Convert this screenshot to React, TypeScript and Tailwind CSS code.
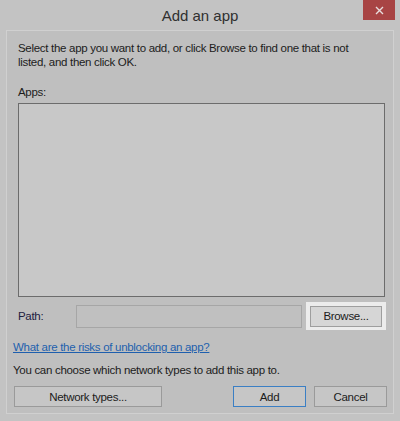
import React from "react";

const font = { fontFamily: '"Liberation Sans", Arial, sans-serif' };

const Button: React.FC<{ label: string; className?: string }> = ({ label, className }) => (
  <button
    className={
      "h-[21px] border text-[11.5px] text-[#1b1b1b] flex items-center justify-center " +
      (className ?? "")
    }
  >
    {label}
  </button>
);

const App = () => {
  return (
    <div className="w-[400px] h-[421px] bg-[#c3c3c3] flex flex-col tracking-[-0.3px]" style={font}>
      <div className="h-[30px] grid grid-cols-[1fr_auto_1fr] items-start">
        <div />
        <div className="pt-[5px] text-[15px] text-[#303030] tracking-normal">Add an app</div>
        <div className="flex justify-end pr-[5px]">
          <button className="w-[32px] h-[20px] bg-[#a84444] flex items-center justify-center">
            <svg width="9" height="9" viewBox="0 0 9 9">
              <path d="M1 1L8 8M8 1L1 8" stroke="#e8dede" strokeWidth="1.4" />
            </svg>
          </button>
        </div>
      </div>

      <div className="mx-[6px] h-[384px] border border-[#d0d0d0] bg-[#bfbfbf] flex flex-col text-[11.5px] leading-[14px] text-[#1c1c1c]">
        <p className="pl-[11px] pt-[10px]">
          Select the app you want to add, or click Browse to find one that is not
          <br />
          listed, and then click OK.
        </p>
        <p className="pl-[11px] mt-[16px]">Apps:</p>
        <div className="ml-[11px] mt-[4px] w-[367px] h-[194px] border border-[#6c6c6c] bg-[#c8c8c8]" />

        <div className="ml-[11px] mt-[5px] h-[28px] flex items-center">
          <span className="w-[58px] text-[#1e2040]">Path:</span>
          <div className="w-[226px] h-[23px] border border-[#a6a6a6] bg-[#c0c0c0]" />
          <div className="ml-[4px] w-[80px] h-[28px] bg-[#ececec] flex items-center justify-center">
            <Button label="Browse..." className="w-[72px] h-[20px] border-[#9e9e9e] bg-[#d6d6d6]" />
          </div>
        </div>

        <a href="#" className="ml-[6px] mt-[10px] text-[#1e5fae] underline">
          What are the risks of unblocking an app?
        </a>
        <p className="ml-[6px] mt-[9px]">You can choose which network types to add this app to.</p>

        <div className="mt-[9px] flex items-center">
          <Button label="Network types..." className="ml-[7px] w-[148px] border-[#9a9a9a] bg-[#c6c6c6]" />
          <Button label="Add" className="ml-[71px] w-[73px] border-[#3b7fc4] bg-[#c6c6c6]" />
          <Button label="Cancel" className="ml-[8px] w-[73px] border-[#9a9a9a] bg-[#c6c6c6]" />
        </div>
      </div>
    </div>
  );
};

export default App;
